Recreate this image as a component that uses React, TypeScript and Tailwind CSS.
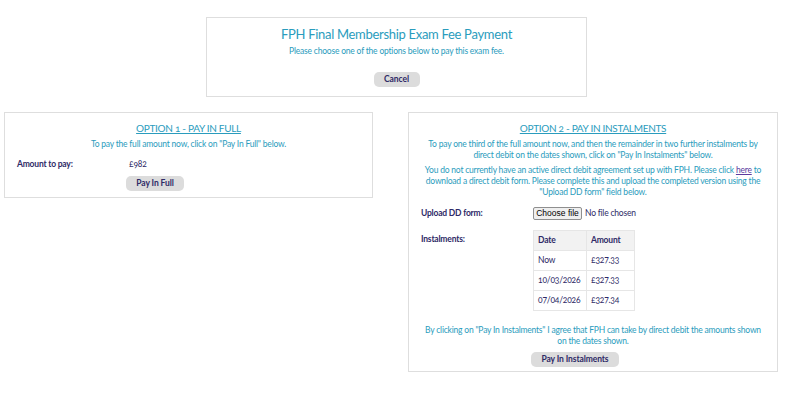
import React from "react";

const TEAL = "text-[#2a9cbd]";
const BODY = "text-[8.5px] tracking-[-0.2px] leading-[11px]";

function GreyButton({ children, className = "" }: { children: React.ReactNode; className?: string }) {
  return (
    <button
      className={`rounded-[5px] bg-[#dcdcdc] text-[8.5px] font-bold leading-none tracking-[-0.1px] text-[#2e2a66] ${className}`}
    >
      {children}
    </button>
  );
}

const rows = [
  ["Now", "£327.33"],
  ["10/03/2026", "£327.33"],
  ["07/04/2026", "£327.34"],
];

export default function App() {
  return (
    <div className="min-h-[404px] bg-white pt-[17px] font-['Lato',sans-serif] [font-feature-settings:'onum']">
      <div className="ml-[206px] flex h-[80px] w-[381px] flex-col items-center border border-[#dedede]">
        <h1 className={`mt-[8px] text-[13px] leading-[16px] tracking-[-0.3px] ${TEAL}`}>
          FPH Final Membership Exam Fee Payment
        </h1>
        <p className={`mt-[4px] ${BODY} ${TEAL}`}>Please choose one of the options below to pay this exam fee.</p>
        <GreyButton className="mt-[15px] h-[15px] w-[46px]">Cancel</GreyButton>
      </div>

      <div className="mt-[15px] flex items-start gap-[35px] pl-[4px]">
        <div className="flex h-[86px] w-[369px] flex-col border border-[#dedede]">
          <h2 className={`mt-[8px] text-center text-[10px] leading-[15px] tracking-[-0.3px] underline ${TEAL}`}>
            OPTION 1 - PAY IN FULL
          </h2>
          <p className={`mt-[3px] text-center ${BODY} ${TEAL}`}>
            To pay the full amount now, click on "Pay In Full" below.
          </p>
          <div className={`mt-[9px] flex items-center ${BODY} text-[#2e2a66]`}>
            <span className="w-[124px] pl-[12px] font-bold">Amount to pay:</span>
            <span>£982</span>
          </div>
          <GreyButton className="ml-[121px] mt-[6px] h-[15px] w-[58px]">Pay In Full</GreyButton>
        </div>

        <div className="flex h-[260px] w-[370px] flex-col border border-[#dedede]">
          <h2 className={`mt-[8px] text-center text-[10px] leading-[15px] tracking-[-0.3px] underline ${TEAL}`}>
            OPTION 2 - PAY IN INSTALMENTS
          </h2>
          <p className={`mt-[3px] px-[14px] text-center ${BODY} ${TEAL}`}>
            To pay one third of the full amount now, and then the remainder in two further instalments by direct
            debit on the dates shown, click on "Pay In Instalments" below.
          </p>
          <p className={`mt-[4px] px-[12px] text-center ${BODY} ${TEAL}`}>
            You do not currently have an active direct debit agreement set up with FPH. Please click{" "}
            <a className="text-[#5b3b9e] underline">here</a> to download a direct debit form. Please complete this
            and upload the completed version using the "Upload DD form" field below.
          </p>
          <div className={`mt-[9px] flex items-center ${BODY} text-[#2e2a66]`}>
            <span className="w-[124px] pl-[12px] font-bold">Upload DD form:</span>
            <span className="flex items-center">
              <span className="flex h-[13px] w-[49px] items-center justify-center rounded-[2px] border border-[#8f8f8f] bg-[#efefef] font-['Liberation_Sans',sans-serif] text-[8.5px] tracking-normal text-black [font-feature-settings:normal]">
                Choose file
              </span>
              <span className="ml-[3px]">No file chosen</span>
            </span>
          </div>
          <div className={`mt-[10px] flex items-start ${BODY} text-[#2e2a66]`}>
            <span className="w-[124px] pl-[12px] pt-[4px] font-bold">Instalments:</span>
            <table className="border-collapse border border-[#e6e6e6]">
              <thead>
                <tr className="h-[20px] bg-[#f2f2f2]">
                  <th className="w-[53px] border border-[#e6e6e6] pl-[4px] text-left font-bold">Date</th>
                  <th className="w-[48px] border border-[#e6e6e6] pl-[4px] text-left font-bold">Amount</th>
                </tr>
              </thead>
              <tbody>
                {rows.map(([d, a]) => (
                  <tr key={d} className="h-[20px]">
                    <td className="border border-[#e6e6e6] pl-[4px]">{d}</td>
                    <td className="border border-[#e6e6e6] pl-[4px]">{a}</td>
                  </tr>
                ))}
              </tbody>
            </table>
          </div>
          <p className={`mt-[14px] px-[16px] text-center ${BODY} ${TEAL}`}>
            By clicking on "Pay In Instalments" I agree that FPH can take by direct debit the amounts shown on the
            dates shown.
          </p>
          <GreyButton className="ml-[122px] mt-[5px] h-[15px] w-[88px]">Pay In Instalments</GreyButton>
        </div>
      </div>
    </div>
  );
}
